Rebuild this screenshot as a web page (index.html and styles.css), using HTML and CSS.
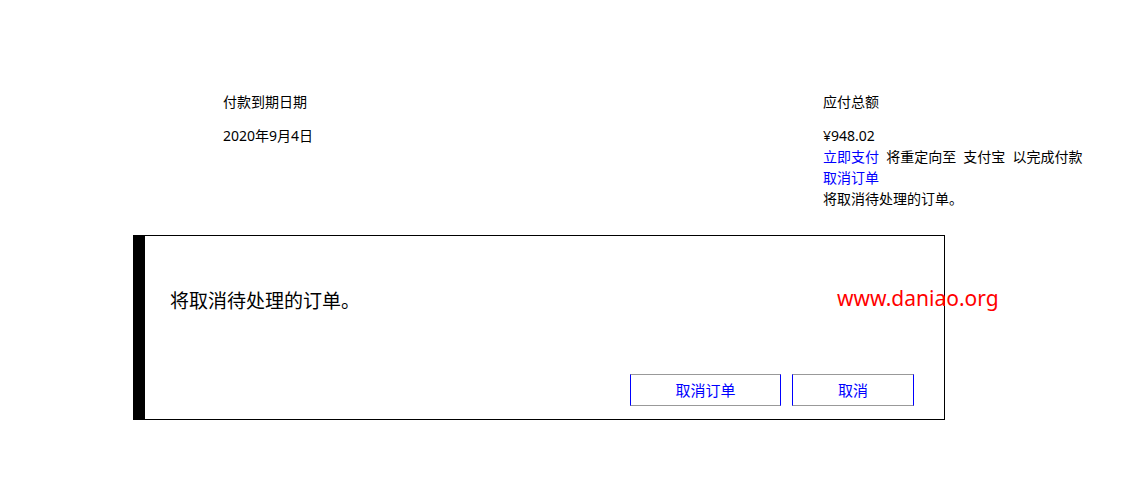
FILE: index.html
```html
<!DOCTYPE html>
<html lang="zh-CN">
<head>
<meta charset="utf-8">
<title>取消订单</title>
<link rel="stylesheet" href="styles.css">
</head>
<body>
<div class="page">
  <div class="summary">
    <div class="col col-left">
      <div class="label">付款到期日期</div>
      <div class="value">2020年9月4日</div>
    </div>
    <div class="col col-right">
      <div class="label">应付总额</div>
      <div class="value">¥948.02</div>
      <div class="line spaced"><a class="link" href="#">立即支付</a> 将重定向至 支付宝 以完成付款</div>
      <div class="line"><a class="link" href="#">取消订单</a></div>
      <div class="line">将取消待处理的订单。</div>
    </div>
  </div>
  <div class="dialog">
    <div class="dialog-text">将取消待处理的订单。</div>
    <div class="dialog-actions">
      <button class="btn btn-wide">取消订单</button>
      <button class="btn btn-narrow">取消</button>
    </div>
  </div>
  <div class="watermark">www.daniao.org</div>
</div>
</body>
</html>
```

FILE: styles.css
```css
html, body {
  margin: 0;
  padding: 0;
  background: #ffffff;
}
body {
  font-family: "Noto Sans", "Noto Sans CJK SC", sans-serif;
  font-size: 14px;
  color: #000;
}
.page {
  position: relative;
  width: 1126px;
  height: 483px;
  padding-top: 91px;
  box-sizing: border-box;
}
.summary {
  display: flex;
  padding-left: 223px;
}
.col-left {
  width: 600px;
}
.col {
  line-height: 21px;
}
.label {
  margin-bottom: 13px;
}
.spaced {
  word-spacing: 3.5px;
}
.link {
  color: #0000ff;
  text-decoration: none;
}
.dialog {
  margin-top: 26px;
  margin-left: 133px;
  width: 812px;
  height: 185px;
  box-sizing: border-box;
  border: 1px solid #000;
  border-left: 12px solid #000;
  display: flex;
  flex-direction: column;
  justify-content: space-between;
  padding: 51px 30px 13px 25px;
}
.dialog-text {
  font-size: 19px;
  line-height: 28px;
}
.dialog-actions {
  display: flex;
  justify-content: flex-end;
  gap: 11px;
}
.btn {
  height: 32px;
  box-sizing: border-box;
  background: #fff;
  color: #0000ff;
  font-family: inherit;
  font-size: 15px;
  line-height: 20px;
  border: 1px solid #999;
  border-left-color: #0000ff;
  border-right-color: #0000ff;
  padding: 0 0 1px;
}
.btn-wide { width: 151px; }
.btn-narrow { width: 122px; }
.watermark {
  position: absolute;
  left: 837px;
  top: 283px;
  color: #ff0000;
  font-size: 21px;
  line-height: 30px;
}
```
